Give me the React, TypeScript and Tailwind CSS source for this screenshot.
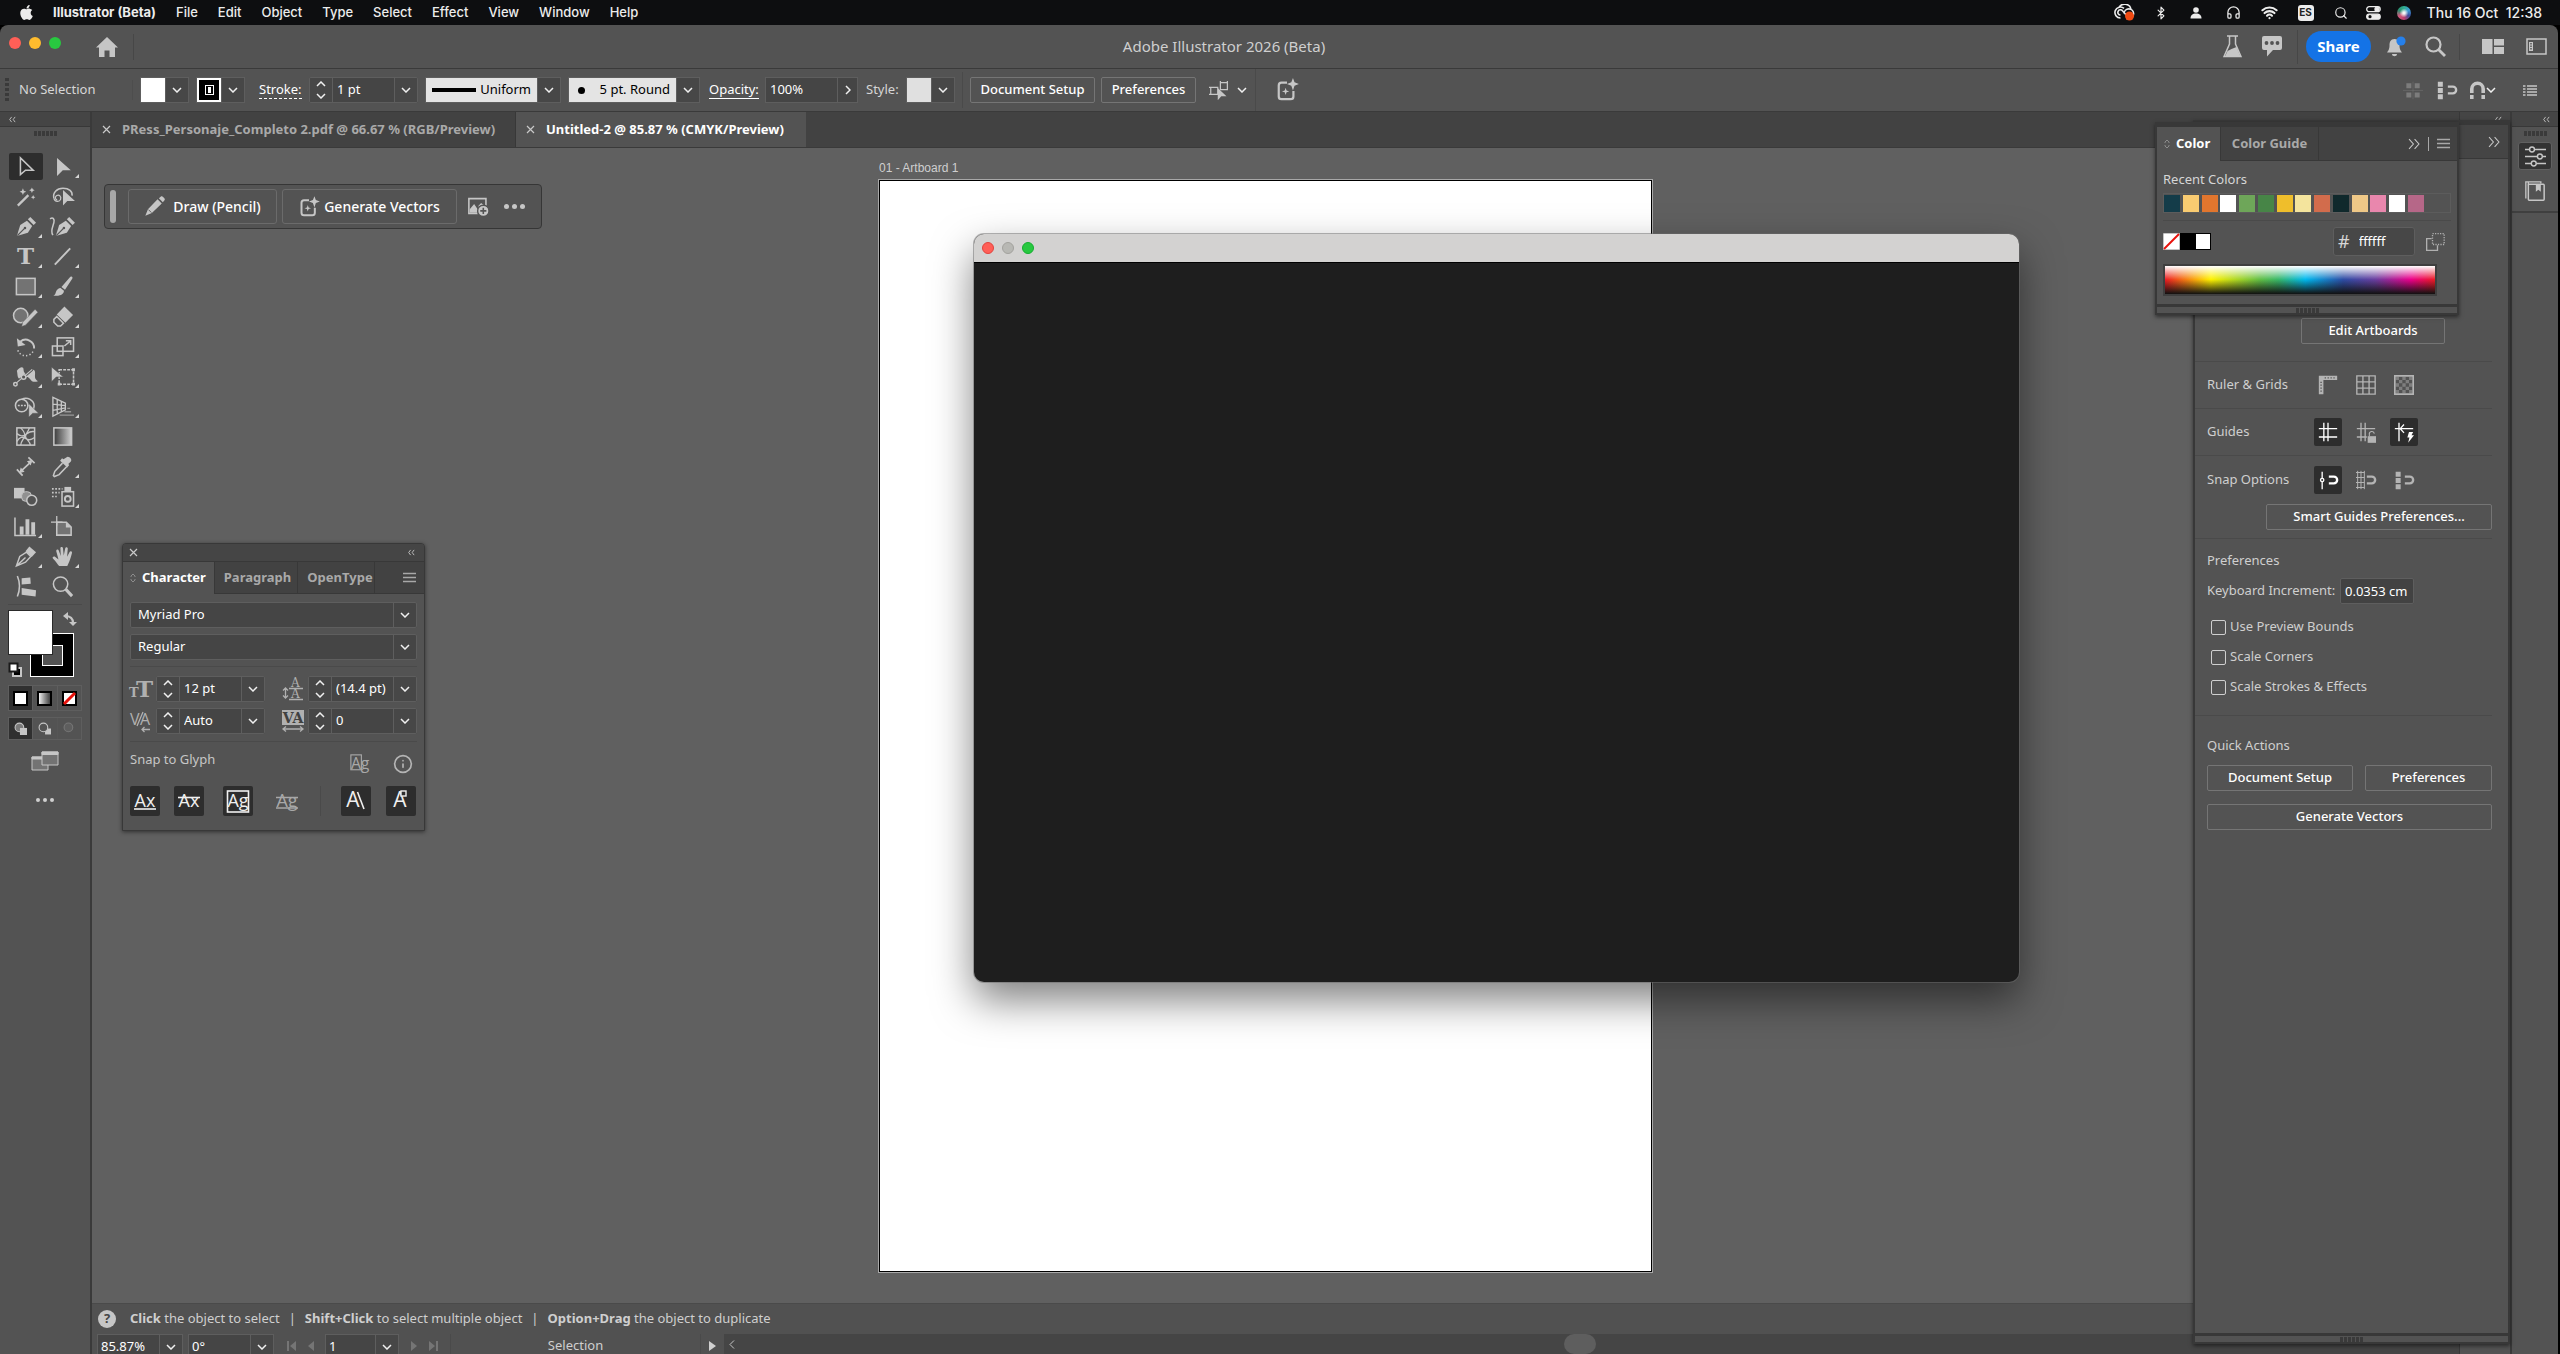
import type { ReactNode } from 'react'
import { Bluetooth, Headphones, Info, Search, Wifi } from 'lucide-react'
import { FaApple } from 'react-icons/fa'

const menus = ['File', 'Edit', 'Object', 'Type', 'Select', 'Effect', 'View', 'Window', 'Help']

const recentColors = [
  '#143c49', '#f9cb71', '#e2762e', '#ffffff', '#6ea659', '#478547', '#efbe2b',
  '#f4e49d', '#d26c4c', '#10292c', '#efc887', '#e987ad', '#ffffff', '#b66788',
]

/* ---------- small shared pieces ---------- */

function Svg({ children, size = 24, className = '' }: { children: ReactNode; size?: number; className?: string }) {
  return (
    <svg
      width={size}
      height={size}
      viewBox="0 0 24 24"
      fill="none"
      stroke="currentColor"
      strokeWidth="1.6"
      className={`shrink-0 overflow-visible ${className}`}
    >
      {children}
    </svg>
  )
}

function Chevron() {
  return (
    <svg width="10" height="6" viewBox="0 0 10 6" fill="none" stroke="#f0f0f0" strokeWidth="1.5" className="shrink-0">
      <path d="M1 1l4 4 4-4" />
    </svg>
  )
}

function DropButton({ label }: { label: string }) {
  return (
    <button aria-label={label} className="flex h-full w-[23px] shrink-0 items-center justify-center border-l border-[#5e5e5e] bg-[#474747]">
      <Chevron />
    </button>
  )
}

function Collapse({ right = false, size = 8 }: { right?: boolean; size?: number }) {
  return (
    <svg width={size} height={size} viewBox="0 0 8 8" fill="none" stroke="#c9c9c9" strokeWidth={right ? 0.7 : 1} className="shrink-0">
      {right ? <path d="M0.7 0.7L3.6 4 0.7 7.3M4.4 0.7L7.3 4 4.4 7.3" /> : <path d="M3 1L0.8 4 3 7M7 1L4.8 4 7 7" />}
    </svg>
  )
}

function Grip() {
  return (
    <div className="flex gap-px">
      {[0, 1, 2, 3, 4, 5].map((i) => (
        <span key={i} className="h-[5px] w-[3px] bg-[#3a3a3a]" />
      ))}
    </div>
  )
}

function Close() {
  return (
    <svg width="9" height="9" viewBox="0 0 9 9" stroke="#c9c9c9" strokeWidth="1.2" className="shrink-0">
      <path d="M1 1l7 7M8 1L1 8" />
    </svg>
  )
}

function MenuLines() {
  return (
    <svg width="13" height="11" viewBox="0 0 13 11" stroke="#a8a8a8" strokeWidth="1.3" className="shrink-0">
      <path d="M0 1.5h13M0 5.5h13M0 9.5h13" />
    </svg>
  )
}

function Sorter() {
  return (
    <svg width="6" height="10" viewBox="0 0 6 10" fill="none" stroke="#8d8d8d" strokeWidth="1" className="shrink-0">
      <path d="M1 4V3l2-2 2 2v1M1 6v1l2 2 2-2V6" />
    </svg>
  )
}

function Stepper({ label }: { label: string }) {
  return (
    <div className="flex w-[22px] shrink-0 flex-col items-center justify-center gap-[6px] bg-[#474747]">
      <button aria-label={`Increase ${label}`} className="rotate-180">
        <Chevron />
      </button>
      <button aria-label={`Decrease ${label}`}>
        <Chevron />
      </button>
    </div>
  )
}

function NumberCombo({ label, value, className }: { label: string; value: string; className: string }) {
  return (
    <div className={`flex h-[26px] overflow-hidden rounded-[2px] border border-[#5e5e5e] bg-[#454545] ${className}`}>
      <Stepper label={label} />
      <input
        aria-label={label}
        defaultValue={value}
        className="w-0 min-w-0 flex-1 border-l border-[#5e5e5e] pl-[4px] text-[13px] text-white outline-none"
      />
      <DropButton label={`${label} presets`} />
    </div>
  )
}

function OutlineButton({ children, className = '' }: { children: ReactNode; className?: string }) {
  return (
    <button
      className={`flex h-[26px] items-center justify-center rounded-[2px] border border-[#757575] text-[13px] font-medium text-white ${className}`}
    >
      {children}
    </button>
  )
}

function SparkleBox({ size = 24 }: { size?: number }) {
  return (
    <Svg size={size}>
      <path d="M12 4H6a3 3 0 0 0-3 3v12a3 3 0 0 0 3 3h10a3 3 0 0 0 3-3v-6" strokeWidth="2.4" />
      <path d="M18.5-1l1.7 4.6L25 5.5l-4.8 1.8-1.7 5.2-1.8-5.2L12 5.5l4.7-1.9z" fill="currentColor" stroke="none" />
      <path d="M10.500 9.500l1 3 3 1-3 1-1 3-1-3-3-1 3-1z" fill="currentColor" stroke="none" />
    </Svg>
  )
}

function SnapMagnet({ children }: { children?: ReactNode }) {
  return (
    <Svg size={20}>
      {children}
      <path d="M13 8h6a4 4 0 0 1 0 8h-6" strokeWidth="2.8" />
    </Svg>
  )
}

/* ---------- toolbox ---------- */

const pen = (
  <>
    <path d="M3 22L6.5 10.5 13.5 6l5.5 5.5-4.5 7z" fill="currentColor" stroke="none" />
    <path d="M14.5 4.5L17 2l6 6-2.5 2.5z" fill="currentColor" stroke="none" />
    <path d="M3.5 21.5L11 14" stroke="#535353" strokeWidth="1.3" />
    <circle cx="11.5" cy="13.5" r="1.3" fill="#535353" stroke="none" />
  </>
)

const tools: { name: string; more?: boolean; icon: ReactNode }[] = [
  { name: 'Selection', icon: <path d="M6.7 3v17.5l5.3-4.7h8z" /> },
  { name: 'Direct Selection', more: true, icon: <path d="M6.3 3v19l6-6h8.400z" fill="currentColor" stroke="none" /> },
  {
    name: 'Magic Wand',
    icon: (
      <>
        <path d="M4 21.5L15 10.5" strokeWidth="2.4" />
        <path
          d="M9.3 3.5l1 2.5 2.5 1-2.5 1-1 2.5-1-2.5-2.5-1 2.5-1zM18.7 2.5l.9 2 2 .9-2 .9-.9 2-.9-2-2-.9 2-.9zM20 10.5l.7 1.6 1.6.7-1.6.7-.7 1.6-.7-1.6-1.6-.7 1.6-.7z"
          fill="currentColor"
          stroke="none"
        />
      </>
    ),
  },
  {
    name: 'Lasso',
    icon: (
      <>
        <path d="M3 14C1.500 8 6 3.500 12.500 3.500c6.500 0 10 3 9.500 7.500" />
        <path d="M3 14c1 4 6 4 7 1s-1.500-5.500-4-4-1.500 4.500 .5 4.500" strokeWidth="1.3" />
        <path d="M12.5 5.3V21.500l4.500-4.700h8z" fill="currentColor" stroke="none" />
      </>
    ),
  },
  { name: 'Pen', more: true, icon: pen },
  {
    name: 'Curvature',
    icon: (
      <>
        <g transform="translate(2 0)">{pen}</g>
        <path d="M-1 4c3-2 5 0 4 4s-4 9-1 13" />
      </>
    ),
  },
  {
    name: 'Type',
    more: true,
    icon: (
      <text x="12" y="20" textAnchor="middle" fill="currentColor" stroke="none" fontSize="24" fontWeight="700" fontFamily="DejaVu Serif, serif">
        T
      </text>
    ),
  },
  { name: 'Line Segment', more: true, icon: <path d="M4 20.5L20 3.5" strokeWidth="2" /> },
  { name: 'Rectangle', more: true, icon: <rect x="2.500" y="3.5" width="19.500" height="17" fill="#737373" /> },
  {
    name: 'Paintbrush',
    more: true,
    icon: (
      <path
        d="M21.8 1.8c1 .8.8 1.5 0 2.700l-7.200 11-3.700-3 8.400-9.700c.8-1 1.700-1.500 2.500-1zM10 13.500l3.500 3c0 3.500-3.500 6-11 5 2.500-1 2-2.500 3-4.700.8-1.800 2.500-3.100 4.500-3.300z"
        fill="currentColor"
        stroke="none"
      />
    ),
  },
  {
    name: 'Shaper',
    more: true,
    icon: (
      <>
        <circle cx="7" cy="11" r="7.500" fill="#737373" />
        <path d="M8 22.500l1-4.500L22 4.500l3 3L12 21z" fill="currentColor" stroke="#535353" strokeWidth=".5" />
      </>
    ),
  },
  {
    name: 'Eraser',
    more: true,
    icon: (
      <>
        <path d="M14 1.500l9 9-8 8-9-8.500z" fill="currentColor" stroke="none" />
        <path d="M6 12l-3 3v3l4 4h3l3-3z" strokeWidth="1.6" />
      </>
    ),
  },
  {
    name: 'Rotate',
    more: true,
    icon: (
      <>
        <path d="M6.5 7a8.8 8.8 0 0 1 14.500 7" strokeWidth="2" />
        <path d="M3 3.500l1 8.500 8-1.500z" fill="currentColor" stroke="none" />
        <path d="M4 16a8.800 8.800 0 0 0 16 1" strokeDasharray="1.4 2.200" strokeWidth="1.6" />
      </>
    ),
  },
  {
    name: 'Scale',
    more: true,
    icon: (
      <>
        <rect x="6.500" y="3" width="17" height="14" />
        <rect x="1.500" y="11.5" width="11" height="10" />
        <path d="M14 11.500l6-5M15.500 6H20.500v4.500" />
      </>
    ),
  },
  {
    name: 'Width',
    more: true,
    icon: (
      <>
        <path d="M3 6c3-4 7-5 7-1s3 5 6 2 6-3 6 1-1 6 3 9c-7 2-7-2-10-4s-4 3-8 2-3-5-4-9z" fill="currentColor" stroke="none" />
        <path d="M1 20L19 4.500" stroke="#535353" strokeWidth="3" />
        <path d="M1 20L19 4.500" strokeWidth="1.200" />
        <circle cx="1.500" cy="20" r="1.800" fill="#535353" />
        <circle cx="10" cy="12.500" r="2.400" fill="#535353" />
      </>
    ),
  },
  {
    name: 'Free Transform',
    more: true,
    icon: (
      <>
        <rect x="8.5" y="5" width="15" height="15" strokeDasharray="3 1.2" />
        <path d="M.5 2v15.500l5-5H13z" fill="currentColor" stroke="#535353" strokeWidth=".6" />
        <path d="M22 3.500h3v3h-3zM22 18.500h3v3h-3zM7 18.500h3v3H7z" fill="currentColor" stroke="none" />
      </>
    ),
  },
  {
    name: 'Shape Builder',
    more: true,
    icon: (
      <>
        <circle cx="8" cy="11" r="6.500" />
        <path d="M8 4.500c6-3 13 1 13 7 0 3-1 4-2 5" />
        <path d="M4 11h12" strokeDasharray="2 1.200" />
        <path d="M15.500 9v14l4-4h6z" fill="currentColor" stroke="#535353" strokeWidth=".4" />
      </>
    ),
  },
  {
    name: 'Perspective Grid',
    more: true,
    icon: (
      <>
        <path d="M2 2.500v19.500L15 15.500V8.500zM6.500 5v14.500M10.800 7v10.500M2 9.500l13 1.500M2 16l13-2.500" strokeWidth="1.4" />
        <path d="M17 14h3M14 17.500h7M9 21h15" strokeWidth="1.4" opacity=".6" />
      </>
    ),
  },
  {
    name: 'Mesh',
    icon: (
      <>
        <rect x="3" y="3" width="18.500" height="18" />
        <path d="M3 9c4 3 6 3 9 1s5-4 9.500-3M3 17c3-5 6-5 9-3s5 2 9.500-1M7 3c4 4 5 6 4 9s-4 5-4 9M16 3c-1 4-4 6-4 9s5 5 5 9" strokeWidth="1.4" />
      </>
    ),
  },
  {
    name: 'Gradient',
    icon: (
      <>
        <defs>
          <linearGradient id="tool-gradient">
            <stop offset="0" stopColor="#3a3a3a" />
            <stop offset="1" stopColor="#d0d0d0" />
          </linearGradient>
        </defs>
        <rect x="3" y="3" width="18.500" height="18" fill="url(#tool-gradient)" />
      </>
    ),
  },
  {
    name: 'Dimension',
    icon: (
      <>
        <path d="M7 17L18 7M3 15l6 6.500M15 2.500l6.500 6" strokeWidth="1.8" />
        <path d="M5.500 19l1.500-6 4 4.500zM19 5l-1.500 6-4-4.500z" fill="currentColor" stroke="none" />
      </>
    ),
  },
  {
    name: 'Eyedropper',
    more: true,
    icon: (
      <>
        <path d="M16 2.500c2-2.500 7 2 4.500 4.500L18 9.500l1 1-2 2.500-7.500-7 2-2.500 1.500 1z" fill="currentColor" stroke="none" />
        <path d="M12 8.500l-8 8.500-1.500 4.500 1 1 5-2 8-8.500" strokeWidth="1.6" />
      </>
    ),
  },
  {
    name: 'Blend',
    icon: (
      <>
        <rect x="0" y="3" width="11" height="11" fill="currentColor" stroke="none" />
        <rect x="8" y="7" width="10" height="10" rx="4" fill="#909090" stroke="#c6c6c6" strokeWidth="1" />
        <circle cx="18.500" cy="16" r="5.200" fill="#535353" />
      </>
    ),
  },
  {
    name: 'Symbol Sprayer',
    more: true,
    icon: (
      <>
        <rect x="11.5" y="7" width="12" height="15" />
        <rect x="14" y="2" width="7" height="5" fill="currentColor" stroke="none" />
        <circle cx="17.500" cy="14.500" r="3" strokeWidth="2" />
        <path d="M1 4h11M1 8h8M1 12h5" strokeDasharray="1.8 1.600" strokeWidth="1.800" />
      </>
    ),
  },
  {
    name: 'Column Graph',
    more: true,
    icon: (
      <>
        <path d="M1 2.500v19h22" />
        <path d="M6 12h4v8.500H6zM12 4.500h4v16h-4zM18 7.500h4v13h-4z" fill="currentColor" stroke="none" />
      </>
    ),
  },
  {
    name: 'Artboard',
    icon: (
      <>
        <path d="M6 7.500h10l5 5V21H6z" fill="#737373" />
        <path d="M0 7.500h12M6 1v10" strokeWidth="1.300" />
        <path d="M15.500 7.500V13H21z" fill="currentColor" stroke="none" />
      </>
    ),
  },
  {
    name: 'Slice',
    more: true,
    icon: (
      <>
        <path d="M16 1.500L23 7.500 18.500 12.500 12 6.500z" fill="currentColor" stroke="none" />
        <path d="M13 7.500l4.500 4.500L12 18l-9.500 4 3.500-10zM3 21.500L12 13" strokeWidth="1.500" />
      </>
    ),
  },
  {
    name: 'Hand',
    more: true,
    icon: (
      <path
        d="M8.500 22c-2-2.500-3-4.500-6.500-8-1-1.500 1-2.700 2.500-1.500L7.800 15 5.500 6.500c-.3-2 2.200-2.400 2.700-.6l2 5.500L9.800 3.500c0-2 2.500-2 2.700 0l.8 7.500 1.500-7.300c.4-1.900 2.800-1.500 2.700.3L16.800 12.200l2.600-4.900c.8-1.400 2.900-.5 2.500 1-1 3.700-1.700 6.200-2.900 9.200L17 22z"
        fill="currentColor"
        stroke="none"
      />
    ),
  },
  {
    name: 'Distort',
    icon: (
      <>
        <path d="M3.500 1c3 7 3 14 0 21.500" />
        <path d="M8 3.500l9-1 .5 6.500-9.500 1zM8 13.500l15 2.500-.5 6.500-14.500-2z" fill="currentColor" stroke="none" />
      </>
    ),
  },
  {
    name: 'Zoom',
    icon: (
      <>
        <circle cx="10" cy="9.5" r="7.500" />
        <path d="M15.500 15l6.500 7" strokeWidth="3.200" />
      </>
    ),
  },
]

function Toolbox() {
  return (
    <aside className="flex w-[92px] shrink-0 flex-col border-r-2 border-[#3a3a3a] bg-[#535353] text-[#c6c6c6]">
      <div className="flex h-[15px] items-center border-b border-[#383838] bg-[#454545] pl-[9px]">
        <Collapse size={7} />
      </div>
      <div className="flex h-[24px] justify-center pt-[4px]">
        <Grip />
      </div>
      <div className="grid grid-cols-[37px_37px] pl-[7px]">
        {tools.map((tool, i) => (
          <button key={tool.name} aria-label={tool.name} className="relative flex h-[30px] items-center justify-center">
            <span className={i === 0 ? 'flex h-[27px] w-[34px] items-center justify-center rounded-[2px] bg-[#2d2d2d]' : 'flex'}>
              <Svg size={23}>{tool.icon}</Svg>
            </span>
            {tool.more && (
              <svg width="4" height="4" viewBox="0 0 4 4" className="absolute right-[2px] bottom-[3px]">
                <path d="M4 0v4H0z" fill="#d6d6d6" />
              </svg>
            )}
          </button>
        ))}
      </div>
      <hr className="mx-2 mt-[3px] border-[#4a4a4a]" />

      {/* Fill and stroke */}
      <svg width="82" height="72" viewBox="0 0 82 72" className="mt-[3px]">
        <rect x="30.5" y="25.5" width="43" height="43" fill="#000" stroke="#fff" />
        <rect x="42.5" y="37.500" width="20" height="20" fill="#535353" stroke="#fff" />
        <rect x="8.5" y="2.5" width="44" height="44" fill="#fff" stroke="#2a2a2a" />
        <path d="M65 8c6 0 8 3 8 7" fill="none" stroke="#c6c6c6" strokeWidth="2.2" />
        <path d="M63 8l5-4v8zM73 18l-4-4h8z" fill="#c6c6c6" />
        <rect x="13" y="60" width="8" height="8" fill="#000" stroke="#c6c6c6" strokeWidth="2" />
        <rect x="9.5" y="55.5" width="8" height="8" fill="#fff" stroke="#1a1a1a" strokeWidth="2" />
      </svg>

      <div className="mt-[5px] ml-2 flex w-[74px] border border-[#5e5e5e]">
        <button aria-label="Color" className="flex h-[24px] flex-1 items-center justify-center bg-[#303030]">
          <span className="size-[15px] border-2 border-black bg-white" />
        </button>
        <button aria-label="Gradient fill" className="flex h-[24px] flex-1 items-center justify-center border-x border-[#5e5e5e]">
          <span className="size-[15px] border-2 border-black bg-linear-to-r from-[#f0f0f0] to-[#444444]" />
        </button>
        <button aria-label="None" className="flex h-[24px] flex-1 items-center justify-center">
          <svg width="15" height="15" viewBox="0 0 15 15">
            <rect x="1" y="1" width="13" height="13" fill="#fff" stroke="#000" strokeWidth="2" />
            <path d="M2 13L13 2" stroke="#e8120c" strokeWidth="3" />
          </svg>
        </button>
      </div>

      <div className="mt-[6px] ml-2 flex w-[74px] border border-[#5e5e5e]">
        {['Draw Normal', 'Draw Behind', 'Draw Inside'].map((mode, i) => (
          <button
            key={mode}
            aria-label={mode}
            className={`flex h-[21px] flex-1 items-center justify-center ${i === 0 ? 'bg-[#303030]' : 'border-l border-[#5e5e5e]'} ${i === 2 ? 'opacity-30' : ''}`}
          >
            <Svg size={13}>
              {i === 1 && <rect x="13" y="12" width="11" height="11" fill="currentColor" stroke="none" />}
              <circle cx="10" cy="10" r="8" fill={i === 1 ? '#535353' : '#7a7a7a'} strokeWidth="2" />
              {i === 0 && <rect x="11" y="11" width="13" height="13" fill="currentColor" stroke="none" />}
            </Svg>
          </button>
        ))}
      </div>

      <button aria-label="Change Screen Mode" className="mt-[11px] flex justify-center">
        <svg width="28" height="20" viewBox="0 0 28 20" fill="#737373" stroke="#c6c6c6">
          <path d="M1 6h16v13H1z" />
          <path d="M1 6h16v2H1z" fill="#c6c6c6" />
          <path d="M11 1h16v13H11z" />
          <path d="M11 1h16v2.500H11z" fill="#c6c6c6" />
        </svg>
      </button>
      <button aria-label="Edit Toolbar" className="mt-[27px] flex justify-center gap-[3px]">
        {[0, 1, 2].map((i) => (
          <span key={i} className="size-[4px] rounded-full bg-[#d0d0d0]" />
        ))}
      </button>
    </aside>
  )
}

/* ---------- top bars ---------- */

function MenuBar() {
  return (
    <header className="flex h-[25px] shrink-0 items-center bg-[#0d0e10] font-[Inter,sans-serif] text-[13px] font-medium text-[#ececec]">
      <FaApple className="ml-[18px] size-[17px]" />
      <nav className="ml-[18px] flex gap-[20px]">
        <button className="font-bold">Illustrator (Beta)</button>
        {menus.map((menu) => (
          <button key={menu}>{menu}</button>
        ))}
      </nav>
      <div className="mr-[18px] ml-auto flex items-center">
        <svg width="22" height="17" viewBox="0 0 22 17" fill="none" stroke="#ececec" strokeWidth="1.6" className="mr-[18px]">
          <path d="M6.500 14a5.500 5.500 0 1 1 3.500-9.700M6.500 11a2.600 2.600 0 1 1 2-4.200L13 12M5 3.500A6.500 6.500 0 0 1 17 5M12 14.500h3a4.800 4.800 0 1 0-5-5" />
          <circle cx="15.5" cy="12" r="4.500" fill="#f04a12" stroke="none" />
        </svg>
        <Bluetooth className="mr-[22px] size-[14px]" />
        <svg width="12" height="12" viewBox="0 0 12 12" fill="#ececec" className="mr-[24px]">
          <circle cx="6" cy="3" r="2.800" />
          <path d="M0.500 11.500c0-3.500 2-5 5.500-5s5.500 1.500 5.500 5z" />
        </svg>
        <Headphones className="mr-[20px] size-[15px]" />
        <Wifi strokeWidth={3} className="mr-[20px] size-[17px]" />
        <span className="mr-[20px] flex h-[16px] w-[16px] items-center justify-center rounded-[3px] bg-[#ececec] text-[10px] font-bold text-[#222222]">
          ES
        </span>
        <Search className="mr-[18px] size-[14px]" />
        <svg width="15" height="14" viewBox="0 0 15 14" fill="none" stroke="#ececec" strokeWidth="1.3" className="mr-[16px]">
          <rect x="0.7" y="0.7" width="13.500" height="5" rx="2.500" />
          <circle cx="11" cy="3.200" r="2" fill="#ececec" />
          <rect x="0.7" y="8.200" width="13.500" height="5" rx="2.500" fill="#ececec" />
          <circle cx="4" cy="10.700" r="1.600" fill="#0d0e10" stroke="none" />
        </svg>
        <span className="mr-[16px] size-[14px] rounded-full bg-[radial-gradient(circle,#f4f4f4_10%,transparent_45%),conic-gradient(#2fae8f,#3b9bd8,#3b4a9b,#c0406e,#d05a7e,#2a8f6f,#2fae8f)]" />
        <span className="text-[14px] whitespace-pre">Thu 16 Oct  12:38</span>
      </div>
    </header>
  )
}

function TitleBar() {
  return (
    <div className="flex h-[44px] shrink-0 items-center border-b border-[#3a3a3a] text-[#c6c6c6]">
      <div className="flex flex-1 items-center">
        <div className="mb-[7px] ml-[9px] flex gap-2">
          <button aria-label="Close window" className="size-[12px] rounded-full bg-[#ff5f57]" />
          <button aria-label="Minimize window" className="size-[12px] rounded-full bg-[#febc2e]" />
          <button aria-label="Zoom window" className="size-[12px] rounded-full bg-[#28c840]" />
        </div>
        <button aria-label="Home" className="ml-[35px]">
          <svg width="22" height="20" viewBox="0 0 22 20" fill="currentColor">
            <path d="M11 0L0 10.500h3V20h5.500v-6.500h5V20H19v-9.500h3z" />
          </svg>
        </button>
        <span className="ml-[15px] h-[26px] w-px bg-[#474747]" />
      </div>
      <h1 className="mr-[110px] text-[15px] text-[#cfcfcf]">Adobe Illustrator 2026 (Beta)</h1>
      <div className="flex flex-1 items-center justify-end">
        <button aria-label="Beta features" className="mr-[20px]">
          <svg width="19" height="23" viewBox="0 0 19 23" fill="none" stroke="currentColor" strokeWidth="1.5">
            <path d="M4 1h11M6.500 1v8L1 21.500h17L12.500 9V1" />
            <path d="M4.500 16l4-2 5-2 4 9.500H2z" fill="currentColor" stroke="none" />
          </svg>
        </button>
        <button aria-label="Comments" className="mr-[15px]">
          <svg width="20" height="21" viewBox="0 0 20 21" fill="currentColor">
            <path d="M2 0h16a2 2 0 0 1 2 2v10a2 2 0 0 1-2 2h-7l-6 6.500V14H2a2 2 0 0 1-2-2V2a2 2 0 0 1 2-2z" />
            <g fill="#535353">
              <circle cx="4.500" cy="7" r="1.900" />
              <circle cx="10" cy="7" r="1.900" />
              <circle cx="15.500" cy="7" r="1.900" />
            </g>
          </svg>
        </button>
        <span className="mr-2 h-[34px] w-px bg-[#474747]" />
        <button className="mr-[16px] h-[31px] w-[65px] rounded-full bg-[#1473e6] text-[15px] font-bold text-white">Share</button>
        <button aria-label="Notifications" className="mr-[18px]">
          <svg width="20" height="22" viewBox="0 0 20 22" fill="currentColor">
            <path d="M7.500 3c4 0 5 3 5 6.500 0 4 1.500 5.500 2.500 7H0c1-1.500 2.500-3 2.500-7C2.500 6 3.500 3 7.500 3zM5 18h5c0 3-5 3-5 0z" />
            <circle cx="14" cy="5" r="4.600" fill="#2680eb" />
          </svg>
        </button>
        <button aria-label="Search" className="mr-[13px]">
          <svg width="21" height="21" viewBox="0 0 21 21" fill="none" stroke="currentColor" strokeWidth="2.2">
            <circle cx="8.500" cy="8.500" r="7" />
            <path d="M13.500 13.500L20 20" strokeWidth="2.800" />
          </svg>
        </button>
        <span className="mr-[22px] h-[26px] w-px bg-[#474747]" />
        <button aria-label="Arrange Documents" className="mr-[22px]">
          <svg width="22" height="15" viewBox="0 0 22 15" fill="currentColor">
            <path d="M0 0h10.500v15H0zM12 0h10v6.500H12zM12 8h10v7H12z" />
          </svg>
        </button>
        <button aria-label="Workspace" className="mr-[11px]">
          <svg width="21" height="17" viewBox="0 0 21 17" fill="none" stroke="currentColor" strokeWidth="1.5">
            <path d="M1 1h19v15H1z" />
            <path d="M3 4h4v9H3z" fill="currentColor" stroke="none" />
            <path d="M5 5v7" stroke="#535353" strokeDasharray="1.500 1" />
          </svg>
        </button>
      </div>
    </div>
  )
}

function OptionsBar() {
  return (
    <div className="flex h-[43px] shrink-0 items-center border-b border-[#3a3a3a] text-[13px] text-[#d6d6d6]">
      <span className="ml-[5px] h-[24px] w-[4px] bg-[repeating-linear-gradient(#3a3a3a_0_3px,transparent_3px_5px)]" />
      <span className="ml-[10px] w-[114px] border-r border-[#4d4d4d]">No Selection</span>
      <div className="ml-[7px] flex h-[26px] w-[49px] border border-[#5e5e5e]">
        <button aria-label="Fill" className="flex-1 bg-white" />
        <DropButton label="Fill options" />
      </div>
      <div className="ml-[7px] flex h-[26px] w-[49px] border border-[#5e5e5e]">
        <button aria-label="Stroke" className="flex flex-1 items-center justify-center border-2 border-white bg-black">
          <span className="flex h-[10px] w-[9px] items-center justify-center border border-white">
            <span className="h-[6px] w-[3px] bg-white" />
          </span>
        </button>
        <DropButton label="Stroke options" />
      </div>
      <a href="#stroke" className="ml-[14px] w-[50px] text-white">
        <span className="border-b border-dashed border-white">Stroke:</span>
      </a>
      <NumberCombo label="Stroke weight" value="1 pt" className="w-[109px]" />
      <div className="ml-[7px] flex h-[26px] w-[136px] border border-[#5e5e5e]">
        <button className="flex flex-1 items-center justify-end gap-1 bg-[#e4e4e4] pr-[6px] text-black">
          <span className="h-[4px] w-[44px] bg-black" />
          Uniform
        </button>
        <DropButton label="Width profile" />
      </div>
      <div className="ml-[7px] flex h-[26px] w-[132px] border border-[#5e5e5e]">
        <button className="flex flex-1 items-center justify-between bg-[#e4e4e4] pr-[6px] pl-[9px] text-black">
          <span className="size-[7px] rounded-full bg-black" />
          5 pt. Round
        </button>
        <DropButton label="Brush definition" />
      </div>
      <a href="#opacity" className="ml-[9px] w-[56px] text-white">
        <span className="border-b border-white">Opacity:</span>
      </a>
      <div className="flex h-[26px] w-[93px] border border-[#5e5e5e] bg-[#454545]">
        <input aria-label="Opacity" defaultValue="100%" className="w-0 flex-1 pl-[4px] text-white outline-none" />
        <button aria-label="Opacity slider" className="flex w-[20px] items-center justify-center border-l border-[#5e5e5e]">
          <span className="-rotate-90">
            <Chevron />
          </span>
        </button>
      </div>
      <span className="ml-[8px] w-[40px]">Style:</span>
      <div className="flex h-[26px] w-[49px] border border-[#5e5e5e]">
        <button aria-label="Graphic style" className="flex-1 bg-[#e0e0e0]" />
        <DropButton label="Graphic styles" />
      </div>
      <span className="mx-[7px] h-[36px] w-px bg-[#4a4a4a]" />
      <OutlineButton className="w-[125px]">Document Setup</OutlineButton>
      <OutlineButton className="ml-[6px] w-[95px]">Preferences</OutlineButton>
      <button aria-label="Select similar" className="ml-[13px] flex items-center gap-[7px] text-[#c6c6c6]">
        <Svg size={21}>
          <path d="M2 8.500h8v8H2zM13 3h8v8h-8zM0 8.500h2M0 16.500h2M21 1v2M13 1v2" strokeWidth="1.4" />
          <path d="M10 9v14l4-4.500h6z" fill="currentColor" stroke="none" />
        </Svg>
        <Chevron />
      </button>
      <span className="mx-[8px] h-[42px] w-px bg-[#4a4a4a]" />
      <button aria-label="Generate" className="ml-[12px] text-[#c6c6c6]">
        <SparkleBox size={22} />
      </button>
      <div className="mr-[21px] ml-auto flex items-center text-[#c6c6c6]">
        <button aria-label="Align to pixel grid" className="mr-[14px] text-[#7c7c7c]">
          <Svg size={20}>
            <path d="M4 4h6v6H4zM14 4h6v6h-6zM4 15h6v6H4zM14 15h6v6h-6z" fill="currentColor" stroke="none" />
            <path d="M0 12.500h24M12 2v21" strokeWidth="1" opacity=".5" />
          </Svg>
        </button>
        <button aria-label="Snap to pixel" className="mr-[12px]">
          <SnapMagnet>
            <path d="M1 2h6v6H1zM1 9.500h6v6H1zM1 17h6v6H1z" fill="currentColor" stroke="none" />
          </SnapMagnet>
        </button>
        <button aria-label="Snap options" className="mr-[27px] flex items-center">
          <svg width="17" height="18" viewBox="0 0 17 18" fill="none" stroke="currentColor" strokeWidth="3.6">
            <path d="M2.800 12V8a5.700 5.700 0 0 1 11.400 0v4M2.800 14v4M14.200 14v4" />
          </svg>
          <Chevron />
        </button>
        <button aria-label="Customize bar">
          <svg width="14" height="11" viewBox="0 0 14 11" stroke="currentColor" strokeWidth="1.400">
            <path d="M4 1h10M4 4h10M4 7h10M4 10h10M0 1h2.500M0 4h2.500M0 7h2.500M0 10h2.500" />
          </svg>
        </button>
      </div>
    </div>
  )
}

/* ---------- document area ---------- */

function DocumentTabs() {
  return (
    <div className="flex h-[36px] shrink-0 border-b border-[#3a3a3a] bg-[#424242] text-[13px] font-bold whitespace-nowrap">
      <div className="flex w-[424px] items-center border-r border-[#383838] pl-[10px] text-[#a9a9a9]">
        <button aria-label="Close tab">
          <Close />
        </button>
        <button className="ml-[11px]">PRess_Personaje_Completo 2.pdf @ 66.67 % (RGB/Preview)</button>
      </div>
      <div className="flex w-[290px] items-center bg-[#535353] pl-[10px] text-white">
        <button aria-label="Close tab">
          <Close />
        </button>
        <button className="ml-[11px]">Untitled-2 @ 85.87 % (CMYK/Preview)</button>
      </div>
    </div>
  )
}

function StatusBar() {
  return (
    <footer className="shrink-0 bg-[#515151] text-[13px] text-[#cfcfcf]">
      <div className="flex h-[31px] items-center border-t border-[#4a4a4a] pl-[6px]">
        <span className="flex size-[18px] items-center justify-center rounded-full bg-[#c6c6c6] text-[13px] font-bold text-[#444444]">?</span>
        <p className="ml-[14px] flex gap-[9px]">
          <span>
            <b>Click</b> the object to select
          </span>
          <span>|</span>
          <span>
            <b>Shift+Click</b> to select multiple object
          </span>
          <span>|</span>
          <span>
            <b>Option+Drag</b> the object to duplicate
          </span>
        </p>
      </div>
      <div className="flex h-[20px] items-start overflow-hidden">
        <div className="ml-[5px] flex h-[26px] w-[86px] shrink-0 border border-[#5e5e5e] bg-[#454545]">
          <input aria-label="Zoom level" defaultValue="85.87%" className="w-0 flex-1 pl-[3px] text-white outline-none" />
          <DropButton label="Zoom presets" />
        </div>
        <div className="ml-[5px] flex h-[26px] w-[86px] shrink-0 border border-[#5e5e5e] bg-[#454545]">
          <input aria-label="Rotation" defaultValue="0°" className="w-0 flex-1 pl-[3px] text-white outline-none" />
          <DropButton label="Rotation presets" />
        </div>
        <div className="flex h-[24px] w-[51px] shrink-0 items-center justify-center gap-[12px] text-[#757575]">
          <button aria-label="First artboard">
            <svg width="10" height="10" viewBox="0 0 10 10" fill="currentColor">
              <path d="M1 0h2v10H1zM10 0v10L4 5z" />
            </svg>
          </button>
          <button aria-label="Previous artboard">
            <svg width="6" height="10" viewBox="0 0 6 10" fill="currentColor">
              <path d="M6 0v10L0 5z" />
            </svg>
          </button>
        </div>
        <div className="flex h-[26px] w-[74px] shrink-0 border border-[#5e5e5e] bg-[#454545]">
          <input aria-label="Artboard number" defaultValue="1" className="w-0 flex-1 pl-[3px] text-white outline-none" />
          <DropButton label="Artboards" />
        </div>
        <div className="flex h-[24px] w-[52px] shrink-0 items-center justify-center gap-[12px] border-r border-[#4a4a4a] text-[#757575]">
          <button aria-label="Next artboard">
            <svg width="6" height="10" viewBox="0 0 6 10" fill="currentColor">
              <path d="M0 0v10l6-5z" />
            </svg>
          </button>
          <button aria-label="Last artboard">
            <svg width="10" height="10" viewBox="0 0 10 10" fill="currentColor">
              <path d="M7 0h2v10H7zM0 0v10l6-5z" />
            </svg>
          </button>
        </div>
        <div className="w-[250px] shrink-0 border-r border-[#4a4a4a] pt-[2px] text-center leading-[18px]">Selection</div>
        <button aria-label="Status options" className="flex h-[24px] w-[23px] shrink-0 items-center justify-center">
          <svg width="7" height="10" viewBox="0 0 7 10" fill="#d0d0d0">
            <path d="M0 0v10l7-5z" />
          </svg>
        </button>
        {/* Horizontal scrollbar */}
        <div className="flex h-[26px] flex-1 items-start bg-[#454545]">
          <button aria-label="Scroll left" className="mt-[6px] ml-[5px]">
            <svg width="6" height="9" viewBox="0 0 6 9" fill="none" stroke="#c6c6c6">
              <path d="M5 0.500L1 4.500l4 4" />
            </svg>
          </button>
          <div className="flex flex-1 justify-center">
            <span className="mr-[34px] h-[20px] w-[32px] rounded-full bg-[#5e5e5e]" />
          </div>
        </div>
      </div>
    </footer>
  )
}

function Taskbar() {
  return (
    <div className="absolute top-[72px] left-[104px] flex h-[45px] items-center rounded-[4px] border border-[#363636] bg-[#535353] text-[14px] font-medium text-white">
      <span className="ml-[5px] h-[33px] w-[6px] rounded-full bg-[#a8a8a8]" />
      <button className="ml-[12px] flex h-[35px] w-[149px] items-center justify-center gap-[8px] rounded-[3px] border border-[#6b6b6b]">
        <Svg size={21} className="text-[#c6c6c6]">
          <path d="M1.500 22.500l3-7.500L15.500 3.800l4.800 4.800L9 19.500zM17 2.500L19 .8c1-.8 2-.6 2.800.2l1.400 1.500c.8.800.8 1.700 0 2.500l-1.700 2z" fill="currentColor" stroke="none" />
          <path d="M5 15.500l3.500 3.500" stroke="#535353" strokeWidth="1" />
        </Svg>
        Draw (Pencil)
      </button>
      <button className="ml-[5px] flex h-[35px] w-[175px] items-center justify-center gap-[5px] rounded-[3px] border border-[#6b6b6b]">
        <span className="text-[#c6c6c6]">
          <SparkleBox size={20} />
        </span>
        Generate Vectors
      </button>
      <button aria-label="Place image" className="ml-[11px] text-[#c6c6c6]">
        <Svg size={21}>
          <path d="M11 20H1V3h19.500v8" strokeWidth="1.8" />
          <path d="M2 19v-4l5-6 4 6v4zM12 11l3-3 4 3-7 4z" fill="currentColor" stroke="none" />
          <circle cx="17.500" cy="17" r="6.500" fill="currentColor" stroke="#535353" />
          <path d="M14 17h7M17.500 13.500v7" stroke="#535353" strokeWidth="1.800" />
        </Svg>
      </button>
      <button aria-label="More options" className="mr-[16px] ml-[15px] flex gap-[3px]">
        {[0, 1, 2].map((i) => (
          <span key={i} className="size-[5px] rounded-full bg-[#c6c6c6]" />
        ))}
      </button>
    </div>
  )
}

function BlankWindow() {
  return (
    <section
      aria-label="Blank window"
      className="absolute top-[122px] left-[974px] flex h-[748px] w-[1045px] flex-col overflow-hidden rounded-[10px] bg-[#1e1e1e] shadow-[0_18px_40px_0px_rgba(0,0,0,0.5)] ring-1 ring-[#6a6a6a]/50"
    >
      <div className="flex h-[29px] items-center gap-2 border-b border-black bg-[#d3d2d1] pl-2">
        <button aria-label="Close" className="size-[12px] rounded-full border border-[#e0443e] bg-[#ff5f57]" />
        <button aria-label="Minimize" className="size-[12px] rounded-full border border-[#a3a29e] bg-[#b8b8b4]" />
        <button aria-label="Zoom" className="size-[12px] rounded-full border border-[#14ae2f] bg-[#28c840]" />
      </div>
    </section>
  )
}

/* ---------- floating panels ---------- */

function GlyphTile({ label, on = true, children }: { label: string; on?: boolean; children: ReactNode }) {
  return (
    <button
      aria-label={label}
      className={`flex size-[30px] shrink-0 items-center justify-center rounded-[2px] ${on ? 'bg-[#2d2d2d] text-[#f0f0f0]' : 'text-[#a8a8a8]'}`}
    >
      <Svg size={24}>
        <g fontFamily="Open Sans, sans-serif">{children}</g>
      </Svg>
    </button>
  )
}

function GlyphText({ text, x = 12, size = 18 }: { text: string; x?: number; size?: number }) {
  return (
    <text x={x} y="18" textAnchor="middle" fontSize={size} fill="currentColor" stroke="none">
      {text}
    </text>
  )
}

function CharacterPanel() {
  return (
    <section
      aria-label="Character"
      className="absolute top-[431px] left-[122px] w-[303px] overflow-hidden rounded-t-[4px] border border-[#383838] bg-[#535353] text-[13px] text-[#d6d6d6] shadow-[0_1px_4px_rgba(0,0,0,0.5)]"
    >
      <div className="flex h-[17px] items-center justify-between bg-[#454545] pr-[9px] pl-[6px]">
        <button aria-label="Close panel">
          <Close />
        </button>
        <Collapse size={7} />
      </div>
      <div className="flex h-[33px] border-t border-[#383838] bg-[#424242] font-bold text-[#a9a9a9]">
        <button className="flex w-[92px] items-center gap-[6px] border-r border-[#383838] bg-[#535353] pl-[7px] text-white">
          <Sorter />
          Character
        </button>
        <button className="w-[83px] border-r border-b border-[#383838] pl-[3px]">Paragraph</button>
        <button className="w-[77px] border-r border-b border-[#383838] pl-[8px]">OpenType</button>
        <button aria-label="Panel menu" className="flex flex-1 items-center justify-end border-b border-[#383838] pr-[8px]">
          <MenuLines />
        </button>
      </div>

      <div className="px-[7px] pt-[8px]">
        {[
          ['Font family', 'Myriad Pro'],
          ['Font style', 'Regular'],
        ].map(([label, value]) => (
          <div key={label} className="mb-[6px] flex h-[26px] rounded-[2px] border border-[#5e5e5e] bg-[#454545]">
            <select aria-label={label} className="flex-1 appearance-none pl-[7px] text-white outline-none">
              <option>{value}</option>
            </select>
            <span className="flex w-[23px] items-center justify-center border-l border-[#5e5e5e]">
              <Chevron />
            </span>
          </div>
        ))}
        <hr className="border-[#4a4a4a]" />
        <div className="mt-[9px] grid grid-cols-[26px_109px_43px_109px] items-center gap-y-[6px]">
          <svg width="22" height="20" viewBox="0 0 22 20" fill="#b0b0b0" fontFamily="DejaVu Serif, serif" fontWeight="700" className="overflow-visible">
            <text x="-1" y="18" fontSize="13">T</text>
            <text x="6" y="18" fontSize="23">T</text>
          </svg>
          <NumberCombo label="Font size" value="12 pt" className="w-[109px]" />
          <svg width="22" height="22" viewBox="0 0 22 22" fill="#b0b0b0" stroke="#b0b0b0" className="ml-[17px] overflow-visible" fontFamily="DejaVu Serif, serif">
            <text x="9" y="9" fontSize="12" stroke="none">A</text>
            <text x="9" y="20" fontSize="12" stroke="none">A</text>
            <path d="M7 10.500h14M7 21.500h14M3.500 10v10M1 12.500L3.500 10 6 12.500M1 17.500L3.500 20 6 17.500" fill="none" strokeWidth="1.3" />
          </svg>
          <NumberCombo label="Leading" value="(14.4 pt)" className="w-[109px]" />
          <svg width="22" height="22" viewBox="0 0 22 22" fill="#b0b0b0" stroke="#b0b0b0" fontFamily="Open Sans, sans-serif" className="overflow-visible">
            <text x="0" y="15" fontSize="16" stroke="none">V</text>
            <text x="10" y="15" fontSize="16" stroke="none">A</text>
            <path d="M7 16L13 2M20 19.500h-8M14.500 17L12 19.500l2.500 2.500" fill="none" strokeWidth="1.300" />
          </svg>
          <NumberCombo label="Kerning" value="Auto" className="w-[109px]" />
          <svg width="22" height="22" viewBox="0 0 22 22" fill="#b0b0b0" stroke="#b0b0b0" className="ml-[17px] overflow-visible" fontFamily="DejaVu Serif, serif">
            <rect width="22" height="15" stroke="none" />
            <text x="11" y="13" fontSize="14" fontWeight="700" textAnchor="middle" fill="#404040" stroke="none">VA</text>
            <path d="M1 19h20M4 16.500L1 19l3 2.500M18 16.500l3 2.500-3 2.500" fill="none" strokeWidth="1.300" />
          </svg>
          <NumberCombo label="Tracking" value="0" className="w-[109px]" />
        </div>
        <hr className="mt-[7px] border-[#4a4a4a]" />
        <div className="mt-[8px] flex h-[26px] text-[#c6c6c6]">
          <span className="flex-1">Snap to Glyph</span>
          <button aria-label="Show glyph guides" className="mt-[3px] text-[#a8a8a8]">
            <Svg size={21}>
              <rect x="1" y="1" width="12" height="17" strokeWidth="1.3" />
              <text x="1" y="17" fontSize="18" fill="currentColor" stroke="none" fontFamily="Open Sans, sans-serif">Ag</text>
            </Svg>
          </button>
          <Info className="mt-[4px] mr-[4px] ml-[22px] size-[20px] text-[#b4b4b4]" />
        </div>
        <div className="mt-[10px] mb-[14px] flex items-center">
          <GlyphTile label="Baseline">
            <GlyphText text="Ax" />
            <path d="M1 20h22" />
          </GlyphTile>
          <span className="w-[14px]" />
          <GlyphTile label="x-height">
            <GlyphText text="Ax" />
            <path d="M1 8.500h22" />
          </GlyphTile>
          <span className="w-[19px]" />
          <GlyphTile label="Glyph bounds">
            <GlyphText text="Ag" />
            <rect x="1.500" y="2" width="21" height="21" />
          </GlyphTile>
          <span className="w-[19px]" />
          <GlyphTile label="Proximity guides" on={false}>
            <GlyphText text="Ag" />
            <path d="M1 8.500h22M1 19h22" />
          </GlyphTile>
          <span className="ml-[18px] h-[30px] w-[21px] border-l border-[#4a4a4a]" />
          <GlyphTile label="Angular guides">
            <GlyphText text="A" x={9} size={21} />
            <path d="M13.500 3L20 20" />
          </GlyphTile>
          <span className="w-[15px]" />
          <GlyphTile label="Anchor point">
            <GlyphText text="A" x={11} size={21} />
            <rect x="12" y="2" width="5" height="5" strokeWidth="1.400" fill="#2d2d2d" />
          </GlyphTile>
        </div>
      </div>
    </section>
  )
}

function PanelFoot() {
  return (
    <div className="flex h-[11px] shrink-0 items-end justify-center border-t-[3px] border-b-2 border-[#383838] bg-[#535353]">
      <Grip />
    </div>
  )
}

function ColorPanel() {
  return (
    <section
      aria-label="Color"
      className="absolute top-[10px] right-[99px] z-20 w-[304px] border-x-2 border-t-[5px] border-[#383838] bg-[#535353] text-[13px] text-[#d6d6d6] shadow-[0_2px_4px_rgba(0,0,0,0.5)]"
    >
      <div className="flex h-[34px] bg-[#424242] font-bold text-[#a9a9a9]">
        <button className="flex w-[64px] items-center gap-[6px] border-r border-[#383838] bg-[#535353] pl-[7px] text-white">
          <Sorter />
          Color
        </button>
        <button className="w-[98px] border-r border-b border-[#383838]">Color Guide</button>
        <div className="flex flex-1 items-center justify-end gap-[8px] border-b border-[#383838] pr-[7px]">
          <Collapse right size={12} />
          <span className="h-[14px] w-px bg-[#a8a8a8]" />
          <MenuLines />
        </div>
      </div>
      <div className="px-[6px]">
        <h2 className="pt-[9px] leading-[18px]">Recent Colors</h2>
        <div className="mt-[5px] flex h-[20px] justify-between border border-[#5c5c5c] py-px pr-[26px]">
          {recentColors.map((color, i) => (
            <button key={i} aria-label={`Color ${color}`} className="h-[17px] w-[16px]" style={{ backgroundColor: color }} />
          ))}
        </div>
        <hr className="mt-[7px] border-[#4a4a4a]" />
        <div className="mt-[6px] flex h-[29px] items-center">
          <button aria-label="None">
            <svg width="17" height="17" viewBox="0 0 17 17">
              <rect width="17" height="17" fill="#fff" stroke="#888" />
              <path d="M1 16L16 1" stroke="#e8120c" strokeWidth="2" />
            </svg>
          </button>
          <button aria-label="Black" className="h-[17px] w-[15px] bg-black" />
          <button aria-label="White" className="h-[17px] w-[16px] border border-black bg-white" />
          <label htmlFor="hex" className="ml-auto flex h-[29px] w-[82px] items-center rounded-[3px] border border-[#5e5e5e] bg-[#474747] pl-[4px] text-[18px]">
            #
            <input id="hex" defaultValue="ffffff" className="ml-[9px] w-[50px] text-[13px] text-white outline-none" />
          </label>
          <button aria-label="Swap colors" className="mr-[6px] ml-[10px] text-[#b0b0b0]">
            <Svg size={20}>
              <path d="M8 8H2v14h13v-6" />
              <rect x="9" y="2" width="14" height="13" strokeDasharray="1.500 1.500" />
            </Svg>
          </button>
        </div>
        <div className="mt-[8px] mb-[8px] h-[32px] w-[274px] border-2 border-[#3f3f3f] bg-[linear-gradient(to_bottom,#ffffff_0%,transparent_48%,#111111_100%),linear-gradient(to_right,#ed1c24_0%,#fff200_17%,#63bf45_35%,#39b86a_42%,#00b9ef_52%,#2e4da5_66%,#6b3fa0_78%,#ec008c_91%,#ed1c24_100%)]" />
      </div>
      <PanelFoot />
    </section>
  )
}

function IconToggle({ label, on = false, children }: { label: string; on?: boolean; children: ReactNode }) {
  return (
    <button
      aria-label={label}
      className={`mr-[10px] flex size-[28px] items-center justify-center rounded-[2px] ${on ? 'bg-[#2d2d2d] text-white' : 'text-[#b4b4b4]'}`}
    >
      {children}
    </button>
  )
}

function IconRow({ title, children }: { title: string; children: ReactNode }) {
  return (
    <div className="flex h-[47px] items-center border-t border-[#4a4a4a] pl-[12px]">
      <h3 className="w-[107px]">{title}</h3>
      {children}
    </div>
  )
}

function PropertiesPanel() {
  return (
    <section
      aria-label="Properties"
      className="absolute top-[8px] right-[48px] bottom-[10px] z-10 flex w-[317px] flex-col border-x-2 border-t-[5px] border-[#383838] bg-[#535353] text-[13px] text-[#cfcfcf] shadow-[0_2px_4px_rgba(0,0,0,0.5)]"
    >
      <div className="flex h-[34px] items-center justify-end border-b border-[#383838] bg-[#454545] pr-[8px]">
        <Collapse right size={12} />
      </div>
      <div className="mr-[16px] flex-1">
        <div className="flex h-[202px] items-end pr-[47px] pb-[17px]">
          <OutlineButton className="ml-auto w-[144px]">Edit Artboards</OutlineButton>
        </div>
        <IconRow title="Ruler & Grids">
          <IconToggle label="Show rulers">
            <Svg size={20}>
              <path d="M1 1h22v5H6.500v17H1z" fill="currentColor" stroke="none" />
              <path d="M8 3.500h14M3.700 8v14" stroke="#535353" strokeDasharray="1.500 2" />
            </Svg>
          </IconToggle>
          <IconToggle label="Show grid">
            <Svg size={20}>
              <path d="M1 1h22v22H1zM8.300 1v22M15.700 1v22M1 8.300h22M1 15.700h22" />
            </Svg>
          </IconToggle>
          <IconToggle label="Show transparency grid">
            <Svg size={20}>
              <path d="M1 1h22v22H1z" strokeWidth="2" />
              <path d="M4 2v20M12 2v20M20 2v20" strokeDasharray="4 4" strokeWidth="4" opacity=".45" />
              <path d="M8 6v16M16 6v16" strokeDasharray="4 4" strokeWidth="4" opacity=".45" />
            </Svg>
          </IconToggle>
        </IconRow>
        <IconRow title="Guides">
          <IconToggle label="Show guides" on>
            <Svg size={20}>
              <path d="M1 8h22M1 18h22M7 1v22M12 1v22" />
            </Svg>
          </IconToggle>
          <IconToggle label="Lock guides">
            <Svg size={20}>
              <path d="M1 8h22M1 18h12M6 1v22M11 1v22" />
              <path d="M14 17h10v8H14z" fill="currentColor" stroke="none" />
              <path d="M16 17v-2a3 3 0 0 1 6-1" strokeWidth="1.300" />
            </Svg>
          </IconToggle>
          <IconToggle label="Smart guides" on>
            <Svg size={20}>
              <path d="M1 8h22M6 1v22M12 3L7.500 8l4.500 5" />
              <path d="M18 12h5l-2 4h3l-7 9 1.500-6.500H16z" fill="currentColor" stroke="none" />
            </Svg>
          </IconToggle>
        </IconRow>
        <div className="flex h-[83px] flex-col border-t border-[#4a4a4a]">
          <div className="flex h-[48px] items-center pl-[12px]">
            <h3 className="w-[107px]">Snap Options</h3>
            <IconToggle label="Snap to point" on>
              <SnapMagnet>
                <path d="M5 2v21" />
                <circle cx="5" cy="12" r="2" fill="#2d2d2d" />
              </SnapMagnet>
            </IconToggle>
            <IconToggle label="Snap to grid">
              <SnapMagnet>
                <path d="M2 1v22M6 1v22M10 1v22M0 3h10M0 9h10M0 15h10M0 21h10" strokeWidth="1.200" />
              </SnapMagnet>
            </IconToggle>
            <IconToggle label="Snap to pixels">
              <SnapMagnet>
                <path d="M2 2h6v6H2zM2 9.500h6v6H2zM2 17h6v6H2z" fill="currentColor" stroke="none" />
              </SnapMagnet>
            </IconToggle>
          </div>
          <OutlineButton className="ml-auto w-[226px]">Smart Guides Preferences...</OutlineButton>
        </div>
        <div className="h-[177px] border-t border-[#4a4a4a] pl-[12px]">
          <h3 className="pt-[12px] leading-[18px]">Preferences</h3>
          <label htmlFor="increment" className="mt-[9px] mb-[8px] flex items-center">
            <span className="w-[133px]">Keyboard Increment:</span>
            <input
              id="increment"
              defaultValue="0.0353 cm"
              className="h-[26px] w-[74px] rounded-[2px] border border-[#5e5e5e] bg-[#424242] pl-[4px] text-white outline-none"
            />
          </label>
          {['Use Preview Bounds', 'Scale Corners', 'Scale Strokes & Effects'].map((option) => (
            <label key={option} className="flex h-[30px] items-center gap-[4px] pl-[4px]">
              <input type="checkbox" className="size-[15px] appearance-none rounded-[2px] border border-[#cfcfcf]" />
              {option}
            </label>
          ))}
        </div>
        <div className="border-t border-[#4a4a4a] pl-[12px]">
          <h3 className="pt-[19px] leading-[20px]">Quick Actions</h3>
          <div className="mt-[10px] grid grid-cols-[146px_1fr] gap-x-[12px] gap-y-[13px]">
            <OutlineButton>Document Setup</OutlineButton>
            <OutlineButton>Preferences</OutlineButton>
            <OutlineButton className="col-span-2">Generate Vectors</OutlineButton>
          </div>
        </div>
      </div>
      <PanelFoot />
    </section>
  )
}

function Dock() {
  return (
    <aside className="flex w-[48px] shrink-0 flex-col border-l-2 border-[#3a3a3a] bg-[#535353] text-[#c6c6c6]">
      <div className="flex h-[15px] items-center justify-end border-b border-[#383838] bg-[#454545] pr-[8px]">
        <Collapse size={7} />
      </div>
      <div className="flex h-[86px] flex-col items-center border-b-2 border-[#3f3f3f] pt-[4px]">
        <Grip />
        <button aria-label="Properties" className="mt-[6px] flex h-[28px] w-[34px] items-center justify-center rounded-[3px] border border-[#606060] bg-[#333333]">
          <Svg size={21}>
            <path d="M0 4h24M0 12h24M0 20h24" />
            <circle cx="8" cy="4" r="2.800" fill="#333333" />
            <circle cx="17" cy="12" r="2.800" fill="#333333" />
            <circle cx="10" cy="20" r="2.800" fill="#333333" />
          </Svg>
        </button>
        <button aria-label="Libraries" className="mt-[11px]">
          <Svg size={20}>
            <path d="M4 5V1h15v2M1 21V1h14" />
            <rect x="4" y="4" width="19" height="19" rx="1" strokeWidth="1.800" />
            <path d="M13 4h6v9l-3-2.500-3 2.500z" fill="currentColor" stroke="none" />
          </Svg>
        </button>
      </div>
    </aside>
  )
}

export default function App() {
  return (
    <div className="flex h-screen flex-col overflow-hidden bg-black font-['Noto_Sans',sans-serif]">
      <MenuBar />
      <div className="relative mr-[2px] flex min-h-0 flex-1 flex-col overflow-hidden rounded-t-[8px] bg-[#535353]">
        <TitleBar />
        <OptionsBar />
        <main className="relative flex min-h-0 flex-1">
          <Toolbox />
          <div className="flex min-w-0 flex-1 flex-col">
            <DocumentTabs />
            <div className="relative min-h-0 flex-1 overflow-hidden bg-[#606060]">
              <span className="absolute top-[12px] left-[787px] font-['Liberation_Sans',sans-serif] text-[12px] leading-[16px] text-[#cfcfcf]">
                01 - Artboard 1
              </span>
              <div className="absolute top-[32px] left-[787px] h-[1092px] w-[773px] border border-black bg-white outline outline-[#a8a8a8]" />
            </div>
            <StatusBar />
          </div>
          <aside className="w-[51px] shrink-0 border-l border-[#383838] bg-[#535353]">
            <div className="flex h-[15px] items-center justify-end bg-[#454545] pr-[8px]">
              <Collapse size={7} />
            </div>
          </aside>
          <Dock />
          <Taskbar />
          <BlankWindow />
          <CharacterPanel />
          <PropertiesPanel />
          <ColorPanel />
        </main>
      </div>
    </div>
  )
}
